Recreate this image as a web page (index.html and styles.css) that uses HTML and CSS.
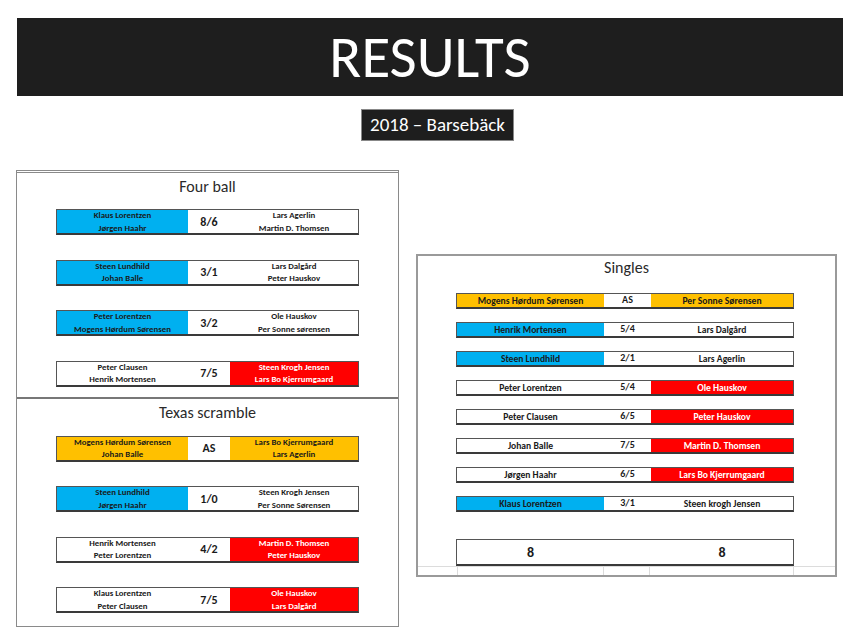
FILE: index.html
```html
<!DOCTYPE html>
<html>
<head>
<meta charset="utf-8">
<link rel="stylesheet" href="styles.css">
</head>
<body>
<div class="page">
  <header class="banner">RESULTS</header>
  <div class="subtitle-wrap"><div class="subtitle">2018 – Barsebäck</div></div>
  <div class="panels">
    <div class="panel left">
      <section class="section fourball">
        <h2 class="title">Four ball</h2>
        <div class="rows double">
          <div class="row"><div class="cell name blue">Klaus Lorentzen<br>Jørgen Haahr</div><div class="cell score">8/6</div><div class="cell name">Lars Agerlin<br>Martin D. Thomsen</div></div>
          <div class="row"><div class="cell name blue">Steen Lundhild<br>Johan Balle</div><div class="cell score">3/1</div><div class="cell name">Lars Dalgård<br>Peter Hauskov</div></div>
          <div class="row"><div class="cell name blue">Peter Lorentzen<br>Mogens Hørdum Sørensen</div><div class="cell score">3/2</div><div class="cell name">Ole Hauskov<br>Per Sonne sørensen</div></div>
          <div class="row"><div class="cell name">Peter Clausen<br>Henrik Mortensen</div><div class="cell score">7/5</div><div class="cell name red">Steen Krogh Jensen<br>Lars Bo Kjerrumgaard</div></div>
        </div>
      </section>
      <section class="section texas">
        <h2 class="title">Texas scramble</h2>
        <div class="rows double">
          <div class="row"><div class="cell name gold">Mogens Hørdum Sørensen<br>Johan Balle</div><div class="cell score">AS</div><div class="cell name gold">Lars Bo Kjerrumgaard<br>Lars Agerlin</div></div>
          <div class="row"><div class="cell name blue">Steen Lundhild<br>Jørgen Haahr</div><div class="cell score">1/0</div><div class="cell name">Steen Krogh Jensen<br>Per Sonne Sørensen</div></div>
          <div class="row"><div class="cell name">Henrik Mortensen<br>Peter Lorentzen</div><div class="cell score">4/2</div><div class="cell name red">Martin D. Thomsen<br>Peter Hauskov</div></div>
          <div class="row"><div class="cell name">Klaus Lorentzen<br>Peter Clausen</div><div class="cell score">7/5</div><div class="cell name red">Ole Hauskov<br>Lars Dalgård</div></div>
        </div>
      </section>
    </div>
    <div class="panel right">
      <h2 class="title">Singles</h2>
      <div class="rows single">
        <div class="row"><div class="cell name gold">Mogens Hørdum Sørensen</div><div class="cell score">AS</div><div class="cell name gold">Per Sonne Sørensen</div></div>
        <div class="row"><div class="cell name blue">Henrik Mortensen</div><div class="cell score">5/4</div><div class="cell name">Lars Dalgård</div></div>
        <div class="row"><div class="cell name blue">Steen Lundhild</div><div class="cell score">2/1</div><div class="cell name">Lars Agerlin</div></div>
        <div class="row"><div class="cell name">Peter Lorentzen</div><div class="cell score">5/4</div><div class="cell name red">Ole Hauskov</div></div>
        <div class="row"><div class="cell name">Peter Clausen</div><div class="cell score">6/5</div><div class="cell name red">Peter Hauskov</div></div>
        <div class="row"><div class="cell name">Johan Balle</div><div class="cell score">7/5</div><div class="cell name red">Martin D. Thomsen</div></div>
        <div class="row"><div class="cell name">Jørgen Haahr</div><div class="cell score">6/5</div><div class="cell name red">Lars Bo Kjerrumgaard</div></div>
        <div class="row"><div class="cell name blue">Klaus Lorentzen</div><div class="cell score">3/1</div><div class="cell name">Steen krogh Jensen</div></div>
      </div>
      <div class="total"><div class="tcell">8</div><div class="tmid"></div><div class="tcell tright">8</div></div>
      <div class="grid"><div class="g g1"></div><div class="g g2"></div><div class="g g3"></div><div class="g g4"></div></div>
    </div>
  </div>
</div>
</body>
</html>
```

FILE: styles.css
```css
* { box-sizing: border-box; margin: 0; padding: 0; }
html, body { background: #ffffff; }
body {
  font-family: "Carlito", "Lato", "Liberation Sans", sans-serif;
  color: #1a1a1a;
}
.page { width: 860px; height: 643px; padding-top: 18px; }

.banner {
  margin: 0 17px;
  height: 78px;
  background: #1e1e1e;
  color: #ffffff;
  font-size: 59px;
  font-weight: 400;
  line-height: 78px;
  text-align: center;
}

.subtitle-wrap { display: flex; justify-content: center; margin-top: 13px; padding-left: 15px; }
.subtitle {
  width: 153px;
  height: 32px;
  background: #1e1e1e;
  border: 1px solid #888;
  color: #fff;
  font-size: 19px;
  line-height: 30px;
  text-align: center;
}

.panels { display: flex; align-items: flex-start; gap: 17px; margin-top: 29px; padding-left: 16px; }

.panel { border: 1px solid #8a8a8a; }
.panel.left { width: 383px; border-top: 3px double #8a8a8a; }
.panel.right { width: 421px; margin-top: 84px; border-width: 2px; border-color: #9a9a9a; }

.title {
  font-size: 16px;
  font-weight: 400;
  line-height: 20px;
  text-align: center;
  color: #2a2a2a;
}

.section.fourball { padding-top: 4px; padding-bottom: 10px; border-bottom: 2px solid #777; }
.section.texas { padding-top: 4px; padding-bottom: 13px; }
.section .title { margin-bottom: 12px; }
.section.texas .title { margin-bottom: 13px; }

.rows { display: flex; flex-direction: column; }
.rows.double { gap: 24.5px; padding: 0 39px; }
.rows.single { gap: 13px; padding: 0 41px 0 38px; }

.row {
  display: flex;
  border: 1px solid #555;
  border-bottom: 2px solid #3a3a3a;
  background: #fff;
}
.rows.double .row { height: 26px; }
.rows.single .row { height: 16px; }

.cell {
  display: flex;
  align-items: center;
  justify-content: center;
  text-align: center;
  font-weight: 700;
}
.cell.name { font-size: 8.8px; line-height: 12.5px; }
.rows.double .cell:nth-child(1) { width: 131px; }
.rows.double .cell:nth-child(2) { width: 42px; }
.rows.double .cell:nth-child(3) { flex: 1; }
.rows.double .score { font-size: 12px; }

.rows.single .cell:nth-child(1) { width: 147px; }
.rows.single .cell:nth-child(2) { width: 47px; }
.rows.single .cell:nth-child(3) { flex: 1; }
.rows.single .cell.name { font-size: 9.6px; line-height: 12px; }
.rows.single .score { font-size: 10px; line-height: 10px; padding-bottom: 2px; }

.blue { background: #00b0f0; }
.gold { background: #ffc000; }
.red { background: #ff0000; color: #ffffff; }

.right .title { margin-top: 2px; margin-bottom: 15px; }

.total {
  display: flex;
  margin: 27px 41px 0 38px;
  height: 27px;
  border: 1px solid #555;
  border-bottom: 2px solid #3a3a3a;
  font-weight: 700;
  font-size: 14px;
}
.tcell { width: 147px; display: flex; align-items: center; justify-content: center; }
.tmid { width: 47px; }
.tcell.tright { flex: 1; }

.grid {
  display: flex;
  height: 9px;
  border-top: 1px solid #dcdcdc;
}
.g { height: 100%; border-right: 1px solid #dcdcdc; }
.g1 { width: 40px; }
.g2 { width: 146px; }
.g3 { width: 46px; }
.g4 { width: 144px; }
```
